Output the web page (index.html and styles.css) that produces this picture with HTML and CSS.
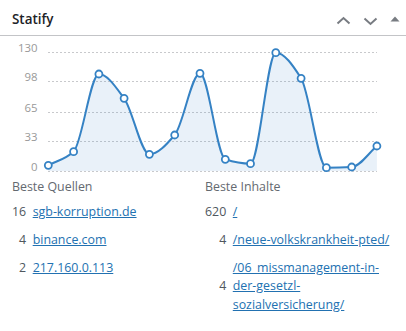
FILE: index.html
```html
<!DOCTYPE html>
<html lang="de">
<head>
<meta charset="utf-8">
<title>Statify</title>
<link rel="stylesheet" href="styles.css">
</head>
<body>
<div class="postbox">
  <div class="postbox-header">
    <h2>Statify</h2>
    <svg class="handle-actions" width="70" height="35" viewBox="336 0 70 35" aria-hidden="true">
      <polyline class="chev" points="337.5,23.5 343.5,18 349.5,23.5"/>
      <polyline class="chev" points="364.5,18.5 370.5,24 376.5,18.5"/>
      <polygon class="tri" points="390.5,21.5 395,16.5 399.5,21.5"/>
    </svg>
  </div>
  <div class="inside">
    <svg class="chart" width="406" height="142" viewBox="0 36 406 142">
      <g class="grid">
        <line x1="48" y1="52.5" x2="377" y2="52.5"/>
        <line x1="48" y1="81.5" x2="377" y2="81.5"/>
        <line x1="48" y1="112.5" x2="377" y2="112.5"/>
        <line x1="48" y1="141.5" x2="377" y2="141.5"/>
        <line x1="48" y1="171.5" x2="377" y2="171.5"/>
      </g>
      <g class="labels">
        <text x="37.5" y="52">130</text>
        <text x="37.5" y="81">98</text>
        <text x="37.5" y="111.5">65</text>
        <text x="37.5" y="141">33</text>
        <text x="37.5" y="170.5">0</text>
      </g>
      <path class="area" d="M48.3 165.3 C56.7 160.8 65.1 159.4 73.6 151.7 C82.0 144.0 90.4 74.0 98.9 74.0 C107.3 74.0 115.7 87.0 124.1 98.3 C132.6 109.6 141.0 154.3 149.4 154.3 C157.9 154.3 166.3 144.8 174.7 135.0 C183.1 125.2 191.6 73.3 200.0 73.3 C208.4 73.3 216.8 156.5 225.3 159.3 C233.7 162.1 242.1 163.7 250.5 163.7 C259.0 163.7 267.4 52.7 275.8 52.7 C284.3 52.7 292.7 65.0 301.1 78.3 C309.5 91.6 318.0 167.7 326.4 167.7 C334.8 167.7 343.2 167.5 351.7 167.0 C360.1 166.6 368.5 153.0 376.9 146.0 L376.9 171 L48.3 171 Z"/>
      <path class="line" d="M48.3 165.3 C56.7 160.8 65.1 159.4 73.6 151.7 C82.0 144.0 90.4 74.0 98.9 74.0 C107.3 74.0 115.7 87.0 124.1 98.3 C132.6 109.6 141.0 154.3 149.4 154.3 C157.9 154.3 166.3 144.8 174.7 135.0 C183.1 125.2 191.6 73.3 200.0 73.3 C208.4 73.3 216.8 156.5 225.3 159.3 C233.7 162.1 242.1 163.7 250.5 163.7 C259.0 163.7 267.4 52.7 275.8 52.7 C284.3 52.7 292.7 65.0 301.1 78.3 C309.5 91.6 318.0 167.7 326.4 167.7 C334.8 167.7 343.2 167.5 351.7 167.0 C360.1 166.6 368.5 153.0 376.9 146.0"/>
      <g class="points">
        <circle cx="48.3" cy="165.3" r="3.5"/>
        <circle cx="73.6" cy="151.7" r="3.5"/>
        <circle cx="98.9" cy="74.0" r="3.5"/>
        <circle cx="124.1" cy="98.3" r="3.5"/>
        <circle cx="149.4" cy="154.3" r="3.5"/>
        <circle cx="174.7" cy="135.0" r="3.5"/>
        <circle cx="200.0" cy="73.3" r="3.5"/>
        <circle cx="225.3" cy="159.3" r="3.5"/>
        <circle cx="250.5" cy="163.7" r="3.5"/>
        <circle cx="275.8" cy="52.7" r="3.5"/>
        <circle cx="301.1" cy="78.3" r="3.5"/>
        <circle cx="326.4" cy="167.7" r="3.5"/>
        <circle cx="351.7" cy="167.0" r="3.5"/>
        <circle cx="376.9" cy="146.0" r="3.5"/>
      </g>
    </svg>
    <div class="tables">
      <table class="stats">
        <caption>Beste Quellen</caption>
        <tbody>
          <tr><td class="num">16</td><td class="target"><a href="#">sgb-korruption.de</a></td></tr>
          <tr><td class="num">4</td><td class="target"><a href="#">binance.com</a></td></tr>
          <tr><td class="num">2</td><td class="target"><a href="#">217.160.0.113</a></td></tr>
        </tbody>
      </table>
      <table class="stats">
        <caption>Beste Inhalte</caption>
        <tbody>
          <tr><td class="num">620</td><td class="target"><a href="#">/</a></td></tr>
          <tr><td class="num">4</td><td class="target"><a href="#">/neue-volkskrankheit-pted/</a></td></tr>
          <tr><td class="num">4</td><td class="target"><a href="#">/06_missmanagement-in-der-gesetzl-sozialversicherung/</a></td></tr>
        </tbody>
      </table>
    </div>
  </div>
</div>
</body>
</html>
```
FILE: styles.css
```css
html, body {
  margin: 0;
  padding: 0;
  background: #fff;
}
body {
  font-family: "Open Sans", "Noto Sans", sans-serif;
  font-size: 12.4px;
  color: #3c434a;
}
.postbox {
  width: 406px;
  height: 331px;
  overflow: hidden;
}
.postbox-header {
  height: 35px;
  border-bottom: 1px solid #c3c4c7;
  display: flex;
  align-items: center;
  justify-content: space-between;
  padding-left: 12px;
}
.postbox-header h2 {
  margin: 0;
  padding-top: 2px;
  font-size: 13.4px;
  font-weight: 600;
  line-height: 20px;
  color: #1d2327;
}
.handle-actions {
  display: block;
  flex: none;
}
.chev {
  fill: none;
  stroke: #787c82;
  stroke-width: 2;
}
.tri {
  fill: #787c82;
}
.chart {
  display: block;
}
.grid line {
  stroke: #c8c9cc;
  stroke-width: 1;
  stroke-dasharray: 2 2;
}
.labels text {
  font-family: "Open Sans", "Noto Sans", sans-serif;
  font-size: 11.4px;
  fill: #999;
  text-anchor: end;
}
.area {
  fill: #3582c4;
  fill-opacity: 0.11;
  stroke: none;
}
.line {
  fill: none;
  stroke: #3582c4;
  stroke-width: 2;
}
.points circle {
  fill: #fff;
  stroke: #3582c4;
  stroke-width: 1.8;
}
.tables {
  display: grid;
  grid-template-columns: 1fr 1fr;
  column-gap: 4px;
  padding: 0 12px;
  align-items: start;
}
.stats {
  width: 100%;
  border-collapse: collapse;
  line-height: 18.4px;
}
.stats caption {
  text-align: left;
  color: #646970;
  padding-bottom: 1.6px;
}
.stats td {
  padding: 4.8px 0;
  vertical-align: middle;
}
.stats td.num {
  width: 1%;
  white-space: nowrap;
  text-align: right;
  padding-right: 6.5px;
  color: #50575e;
}
.stats a {
  color: #2271b1;
  text-decoration: underline;
}
```
